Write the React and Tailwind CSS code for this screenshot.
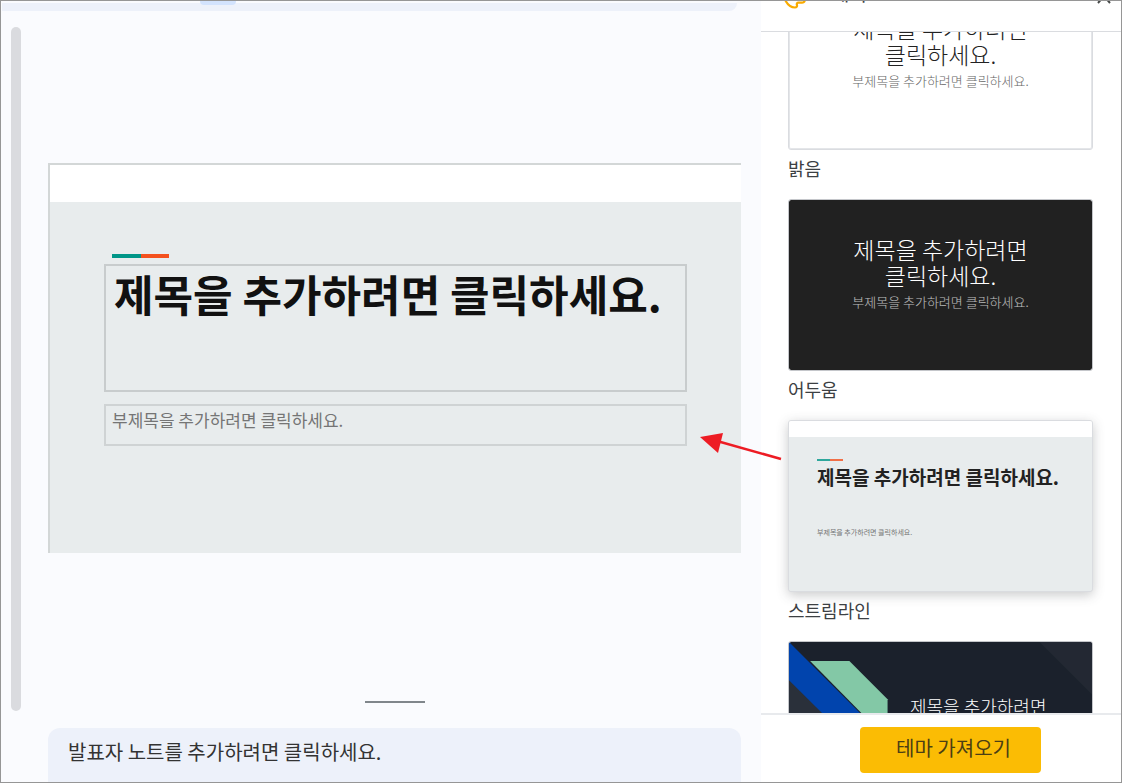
import React from "react";

const TITLE = "제목을 추가하려면 클릭하세요.";
const SUBTITLE = "부제목을 추가하려면 클릭하세요.";

function PaletteIcon() {
  return (
    <svg viewBox="0 0 24 24" className="size-6" fill="none" stroke="#f9ab00" strokeWidth="2.2" aria-hidden="true">
      <path d="M12 2a10 10 0 0 0-9 14.500C5 20 8.500 22.500 12 22.500c1.800 0 2.400-1.200 1.900-2.500-.4-1.300.2-2.300 1.500-2.300H19c2 0 3-2 3-4.300C22 6.500 17.500 2 12 2Z" />
    </svg>
  );
}

function Accent({ small }) {
  return (
    <div className={small ? "flex h-[2px] w-[26px] opacity-80" : "flex h-1 w-[57px]"}>
      <span className="flex-1 bg-[#009688]" />
      <span className="flex-1 bg-[#f4511e]" />
    </div>
  );
}

function ThemeCard({ label, children, className }) {
  return (
    <li className="flex h-[221px] shrink-0 flex-col">
      <button
        type="button"
        aria-label={label}
        className={"h-[172px] w-full shrink-0 overflow-hidden rounded-[3px] border bg-clip-padding " + className}
      >
        {children}
      </button>
      <span className="mt-1 text-[18px] leading-7 text-[#3c4043]">{label}</span>
    </li>
  );
}

function CenteredPreview() {
  return (
    <span className="flex h-full flex-col items-center pt-9 text-center">
      <span className="w-[200px] text-[23px] leading-[26px] font-light">{TITLE}</span>
      <span className="mt-1 text-[13px] leading-5 font-light opacity-70">{SUBTITLE}</span>
    </span>
  );
}

function Editor() {
  return (
    <main className="flex min-w-0 flex-1 flex-col bg-[#fafbfe]">
      <div className="mt-[2px] mr-6 ml-[1px] flex h-2 rounded-br-2xl bg-[#edf1fa]">
        <span className="-mt-[2px] ml-[198px] h-1 w-9 rounded-b bg-[#d3e3fd]" />
      </div>
      <div className="flex min-h-0 flex-1">
        <div className="mt-4 mr-[27px] mb-[71px] ml-[10px] w-[10px] shrink-0 rounded-full bg-[#dadbdf]" />
        <div className="flex min-w-0 flex-1 flex-col pr-5">
          <div className="flex min-h-0 flex-1 items-center pt-1">
            <div className="relative flex aspect-video w-full flex-col border-t-2 border-l-2 border-[#d3d7d7] bg-[#e8eced]">
              <div className="h-[37px] shrink-0 bg-white" />
              <div className="flex flex-col px-[54px] pt-[52px]">
                <div className="pl-2">
                  <Accent />
                </div>
                <textarea
                  aria-label="제목"
                  placeholder={TITLE}
                  rows={1}
                  className="mt-[6px] block h-[128px] w-full resize-none overflow-hidden border-2 border-[#c8cccd] bg-transparent px-2 py-0 text-[43px] leading-[54px] font-bold whitespace-nowrap text-[#111] placeholder:text-[#111]"
                />
                <input
                  aria-label="부제목"
                  placeholder={SUBTITLE}
                  className="mt-3 h-[42px] w-full border-2 border-[#cfd3d4] bg-transparent px-[6px] pb-[11px] text-[17px] text-[#757575] placeholder:text-[#757575]"
                />
              </div>
              <svg
                viewBox="0 0 84 32"
                className="pointer-events-none absolute right-[-42px] bottom-[91px] z-10 h-8 w-[84px]"
                aria-hidden="true"
              >
                <path d="M82 29 18 11" stroke="#ed1c24" strokeWidth="2.500" />
                <path d="M1 7 24 3 19 23Z" fill="#ed1c24" />
              </svg>
            </div>
          </div>
          <div className="mb-[25px] h-[2px] w-[60px] shrink-0 self-center bg-[#80868b]" />
          <textarea
            aria-label="발표자 노트"
            placeholder="발표자 노트를 추가하려면 클릭하세요."
            rows={1}
            className="block h-[54px] w-full shrink-0 resize-none overflow-hidden rounded-t-xl bg-[#edf1fa] px-5 pt-[9px] text-[20px] leading-[30px] text-[#333] placeholder:text-[#333]"
          />
        </div>
      </div>
    </main>
  );
}

function ThemePanel() {
  return (
    <aside className="flex w-[360px] shrink-0 flex-col bg-white">
      <header className="flex h-[31px] shrink-0 items-start overflow-hidden border-b border-[#dadce0] pr-[7px] pl-[22px]">
        <span className="-mt-4">
          <PaletteIcon />
        </span>
        <h2 className="-mt-5 ml-6 flex-1 text-[20px] leading-6 text-[#3c4043]">테마</h2>
        <button type="button" aria-label="닫기" className="-mt-4">
          <svg viewBox="0 0 20 20" className="size-5" stroke="#444746" strokeWidth="2" aria-hidden="true">
            <path d="m4 4 12 14M16 4 4 18" />
          </svg>
        </button>
      </header>
      <div className="min-h-0 flex-1 overflow-hidden pr-7 pl-[27px]">
        <ul className="-mt-[54px] flex flex-col">
          <ThemeCard label="밝음" className="border-[#dadce0] bg-white text-[#222] shadow-[inset_0_0_0_1px_#e4e6e9]">
            <CenteredPreview />
          </ThemeCard>
          <ThemeCard label="어두움" className="border-[#c4c6ca] bg-[#212121] text-white">
            <CenteredPreview />
          </ThemeCard>
          <ThemeCard label="스트림라인" className="border-[#dadce0] bg-[#e8eced] shadow-[0_3px_12px_rgba(60,64,67,0.28)]">
            <span className="flex h-full flex-col text-left">
              <span className="h-4 bg-white" />
              <span className="flex flex-col pt-[22px] pl-7">
                <Accent small />
                <span className="mt-[2px] text-[19px] leading-7 font-bold whitespace-nowrap text-[#222]">{TITLE}</span>
                <span className="mt-[35px] text-[7px] leading-3 text-[#757575]">{SUBTITLE}</span>
              </span>
            </span>
          </ThemeCard>
          <ThemeCard label="포커스" className="border-[#c4c6ca] bg-[#1b212c]">
            <span className="relative block h-full">
              <svg viewBox="0 0 302 169" className="absolute inset-0 size-full" preserveAspectRatio="xMinYMin slice" aria-hidden="true">
                <path d="M249 0H302V53Z" fill="#232833" />
                <path d="M0 37 132 169H0Z" fill="#2a303a" />
                <path d="M0 0 169 169H132L0 38Z" fill="#0144ad" />
                <path d="M21 19H60L98 57V97Z" fill="#83c8a6" />
              </svg>
              <span className="relative block pt-[52px] pl-[121px] text-left text-[18px] leading-6 font-light text-white">
                제목을 추가하려면
              </span>
            </span>
          </ThemeCard>
        </ul>
      </div>
      <footer className="flex h-[69px] shrink-0 items-start justify-center border-t-2 border-[#e8eaed] pt-3 pl-[18px]">
        <button type="button" className="h-[46px] w-[181px] rounded bg-[#fbbc04] pb-1 pl-[7px] text-[20px] text-[#4b3f14]">
          테마 가져오기
        </button>
      </footer>
    </aside>
  );
}

export default function App() {
  return (
    <div className="flex h-screen w-full overflow-hidden border border-[#969696] bg-white font-['Noto_Sans_CJK_KR',sans-serif]">
      <Editor />
      <ThemePanel />
    </div>
  );
}
